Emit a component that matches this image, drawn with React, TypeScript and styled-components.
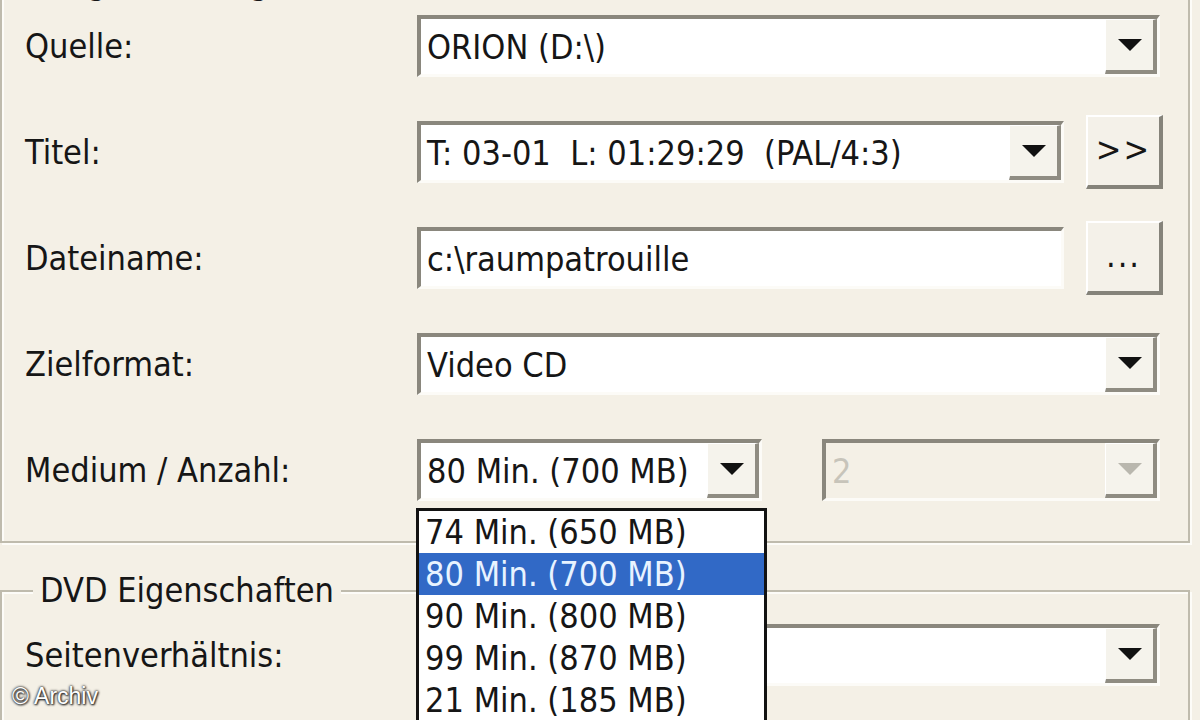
import React from 'react'
import styled, { createGlobalStyle } from 'styled-components'

const GlobalStyle = createGlobalStyle`
  html, body {
    margin: 0;
    padding: 0;
    background: #f4f0e6;
  }
  body {
    font-family: "DejaVu Sans Condensed", "DejaVu Sans", Tahoma, sans-serif;
    color: #161616;
  }
`

const Page = styled.div`
  position: relative;
  width: 1200px;
  height: 720px;
  overflow: hidden;
  background: #f4f0e6;
  font-size: 34px;
`

const GroupBox = styled.div<{ $top: number; $pt: number; $pb: number }>`
  position: relative;
  margin: ${p => p.$top}px 10px 0 0;
  padding: ${p => p.$pt}px 25px ${p => p.$pb}px 23px;
  border: 2px solid #bfbbad;
  box-shadow: inset 2px 2px 0 #fdfcf8, 2px 2px 0 #fdfcf8;
`

const Legend = styled.div<{ $raise?: number }>`
  position: absolute;
  top: ${p => -20 - (p.$raise || 0)}px;
  left: 31px;
  padding: 0 7px;
  line-height: 36px;
  background: #f4f0e6;
  white-space: nowrap;
`

const Rows = styled.div`
  display: flex;
  flex-direction: column;
  gap: 32px;
`

const Row = styled.div`
  display: grid;
  grid-template-columns: 370px 1fr 77px;
  column-gap: 22px;
  align-items: center;
  height: 74px;
`

const Label = styled.div`
  white-space: nowrap;
`

const Field = styled.div<{ $wide?: boolean; $disabled?: boolean }>`
  display: flex;
  align-items: stretch;
  box-sizing: border-box;
  height: 62px;
  grid-column: ${p => (p.$wide ? '2 / 4' : 'auto')};
  margin-right: ${p => (p.$wide ? 3 : 0)}px;
  background: ${p => (p.$disabled ? '#f4f0e6' : '#ffffff')};
  border-style: solid;
  border-width: 4px 3px 3px 4px;
  border-color: #8a877d #fcfbf7 #fcfbf7 #8a877d;
  color: ${p => (p.$disabled ? '#c7c4ba' : '#161616')};
`

const FieldText = styled.div`
  flex: 1;
  display: flex;
  align-items: center;
  padding-left: 6px;
  white-space: pre;
  overflow: hidden;
`

const DropButton = styled.div`
  display: flex;
  align-items: center;
  justify-content: center;
  width: 52px;
  box-sizing: border-box;
  background: #f5f3ec;
  border-style: solid;
  border-width: 1px 4px 4px 1px;
  border-color: #ffffff #8f8c82 #8f8c82 #ffffff;
`

const PushButton = styled.button`
  width: 77px;
  height: 74px;
  padding: 0 0 4px;
  box-sizing: border-box;
  font: inherit;
  color: #161616;
  background: #f4f1e9;
  border-style: solid;
  border-width: 2px 4px 4px 2px;
  border-color: #ffffff #85837a #85837a #ffffff;
  display: flex;
  align-items: center;
  justify-content: center;
  letter-spacing: 2px;
`

const SplitCell = styled.div`
  grid-column: 2 / 4;
  margin-right: 3px;
  display: grid;
  grid-template-columns: 345px 1fr;
  column-gap: 60px;
  align-items: center;
`

const Anchor = styled.div`
  position: relative;
`

const DropList = styled.div`
  position: absolute;
  top: calc(100% + 7px);
  left: -1px;
  width: 351px;
  box-sizing: border-box;
  background: #ffffff;
  border: 3px solid #121212;
  z-index: 5;
`

const ListItem = styled.div<{ $selected?: boolean }>`
  height: 42px;
  line-height: 42px;
  padding-left: 6px;
  white-space: nowrap;
  background: ${p => (p.$selected ? '#3169c6' : 'transparent')};
  color: ${p => (p.$selected ? '#e8f3ff' : '#161616')};
`

const Watermark = styled.div`
  position: absolute;
  left: 12px;
  bottom: 10px;
  font-family: "Liberation Sans", Arial, sans-serif;
  font-size: 23px;
  color: #ffffff;
  text-shadow: 0 0 3px #2a2a2a, 0 0 2px #2a2a2a, 1px 1px 2px #2a2a2a;
  z-index: 10;
`

const Arrow = ({ disabled }: { disabled?: boolean }) => (
  <svg width="26" height="14" viewBox="0 0 26 14">
    <path d="M1 1 H25 L13 13 Z" fill={disabled ? '#b9b7ae' : '#111'} />
  </svg>
)

const Combo = ({ value, wide, disabled }: { value: string; wide?: boolean; disabled?: boolean }) => (
  <Field $wide={wide} $disabled={disabled}>
    <FieldText>{value}</FieldText>
    <DropButton>
      <Arrow disabled={disabled} />
    </DropButton>
  </Field>
)

const media = [
  '74 Min. (650 MB)',
  '80 Min. (700 MB)',
  '90 Min. (800 MB)',
  '99 Min. (870 MB)',
  '21 Min. (185 MB)',
]

export default function App() {
  return (
    <Page>
      <GlobalStyle />
      <GroupBox $top={-14} $pt={21} $pb={34}>
        <Legend $raise={4}>Eingabe / Ausgabe</Legend>
        <Rows>
          <Row>
            <Label>Quelle:</Label>
            <Combo value="ORION (D:\)" wide />
          </Row>
          <Row>
            <Label>Titel:</Label>
            <Combo value="T: 03-01  L: 01:29:29  (PAL/4:3)" />
            <PushButton>&gt;&gt;</PushButton>
          </Row>
          <Row>
            <Label>Dateiname:</Label>
            <Field>
              <FieldText>c:\raumpatrouille</FieldText>
            </Field>
            <PushButton>...</PushButton>
          </Row>
          <Row>
            <Label>Zielformat:</Label>
            <Combo value="Video CD" wide />
          </Row>
          <Row>
            <Label>Medium / Anzahl:</Label>
            <SplitCell>
              <Anchor>
                <Combo value="80 Min. (700 MB)" />
                <DropList>
                  {media.map(m => (
                    <ListItem key={m} $selected={m.startsWith('80')}>{m}</ListItem>
                  ))}
                </DropList>
              </Anchor>
              <Combo value="2" disabled />
            </SplitCell>
          </Row>
        </Rows>
      </GroupBox>

      <GroupBox $top={47} $pt={26} $pb={30}>
        <Legend>DVD Eigenschaften</Legend>
        <Rows>
          <Row>
            <Label>Seitenverhältnis:</Label>
            <Combo value="" wide />
          </Row>
        </Rows>
      </GroupBox>

      <Watermark>© Archiv</Watermark>
    </Page>
  )
}
